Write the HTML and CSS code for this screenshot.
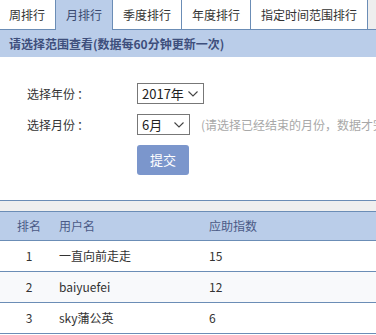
FILE: index.html
```html
<!DOCTYPE html>
<html lang="zh-CN">
<head>
<meta charset="utf-8">
<link rel="stylesheet" href="styles.css">
</head>
<body>
<div class="page">
  <div class="tabs">
    <div class="tab first">周排行</div>
    <div class="tab active">月排行</div>
    <div class="tab">季度排行</div>
    <div class="tab">年度排行</div>
    <div class="tab">指定时间范围排行</div>
  </div>
  <div class="bar">请选择范围查看(数据每60分钟更新一次)</div>
  <div class="form">
    <div class="row">
      <div class="label">选择年份<span class="colon">：</span></div>
      <div class="select year"><span>2017年</span><svg class="chev" width="10" height="6" viewBox="0 0 10 6"><path d="M0.5 0.5 L5 5 L9.5 0.5" fill="none" stroke="#444" stroke-width="1.1"/></svg></div>
    </div>
    <div class="row">
      <div class="label">选择月份<span class="colon">：</span></div>
      <div class="select month"><span>6月</span><svg class="chev" width="10" height="6" viewBox="0 0 10 6"><path d="M0.5 0.5 L5 5 L9.5 0.5" fill="none" stroke="#444" stroke-width="1.1"/></svg></div>
      <div class="hint">(请选择已经结束的月份，数据才完整)</div>
    </div>
    <div class="row">
      <div class="label"></div>
      <div class="btn">提交</div>
    </div>
  </div>
  <div class="table">
    <div class="gap"></div>
    <div class="tr head"><div class="c1">排名</div><div class="c2">用户名</div><div class="c3">应助指数</div></div>
    <div class="tr"><div class="c1">1</div><div class="c2">一直向前走走</div><div class="c3">15</div></div>
    <div class="tr alt"><div class="c1">2</div><div class="c2">baiyuefei</div><div class="c3">12</div></div>
    <div class="tr"><div class="c1">3</div><div class="c2">sky蒲公英</div><div class="c3">6</div></div>
  </div>
</div>
</body>
</html>
```

FILE: styles.css
```css
html, body {
  margin: 0;
  padding: 0;
  background: #fff;
  overflow: hidden;
}
body {
  font-family: "Noto Sans CJK SC", "Noto Sans", sans-serif;
  font-size: 12px;
  color: #333;
}
.page {
  width: 376px;
  height: 335px;
  overflow: hidden;
}
.tabs {
  display: flex;
  height: 29px;
  background: #eeeeee;
  border-bottom: 1px solid #6b8db6;
}
.tab {
  background: #fff;
  padding: 0 10px;
  line-height: 29px;
  height: 29px;
  border-right: 1px solid #6b8db6;
  color: #333;
  white-space: nowrap;
  flex-shrink: 0;
}
.tab.first {
  padding-left: 9px;
}
.tab.active {
  background: #bacde9;
  height: 30px;
  margin-bottom: -1px;
  color: #3b4a70;
}
.bar {
  background: #bacde9;
  height: 27px;
  line-height: 27px;
  padding-left: 9px;
  font-weight: bold;
  color: #3e4f7c;
  white-space: nowrap;
}
.form {
  padding: 26px 0 0 27px;
  height: 117px;
}
.row {
  display: flex;
  align-items: center;
  margin-bottom: 10px;
  white-space: nowrap;
}
.label {
  width: 110px;
  flex-shrink: 0;
  color: #333;
}
.colon {
  margin-left: 2px;
}
.select {
  box-sizing: border-box;
  flex-shrink: 0;
  height: 21px;
  border: 1px solid #777;
  display: flex;
  align-items: center;
  justify-content: space-between;
  padding: 0 5px 0 4px;
  font-size: 13px;
  color: #222;
  background: #fff;
}
.select.year { width: 67px; }
.select.month { width: 53px; }
.chev { display: block; }
.hint {
  margin-left: 11px;
  color: #a8a8a8;
  font-size: 12px;
  flex-shrink: 0;
}
.btn {
  flex-shrink: 0;
  width: 52px;
  height: 30px;
  line-height: 30px;
  text-align: center;
  background: #7b96cc;
  color: #fff;
  border-radius: 3px;
  font-size: 13px;
}
.table {
  border-top: 1px solid #6b8db6;
}
.gap {
  height: 10px;
  background: #efefef;
  border-bottom: 1px solid #6b8db6;
}
.tr {
  display: grid;
  grid-template-columns: 59px 150px 1fr;
  height: 30px;
  line-height: 30px;
  border-bottom: 1px solid #6b8db6;
  font-size: 12px;
  color: #333;
}
.tr.head {
  height: 28px;
  line-height: 28px;
  background: #bacde9;
  color: #4a5a86;
}
.tr.alt {
  background: #f8f9fb;
}
.c1 {
  text-align: center;
  padding-right: 1px;
}
```
